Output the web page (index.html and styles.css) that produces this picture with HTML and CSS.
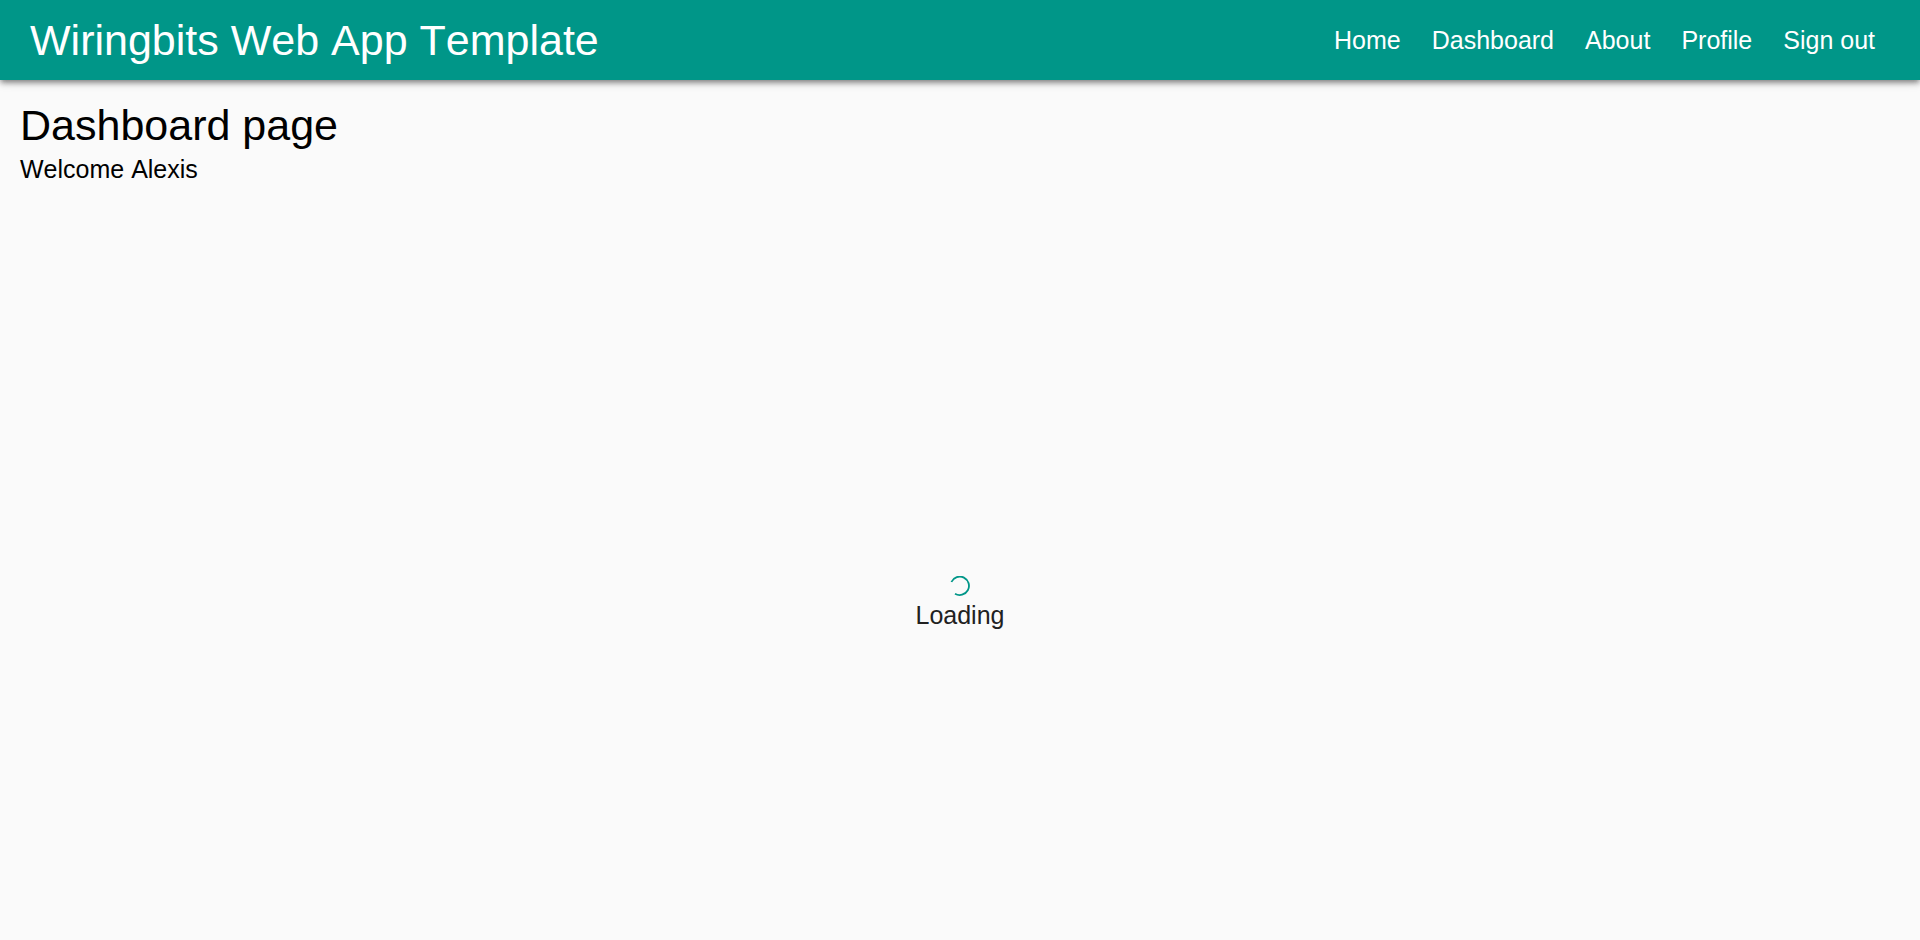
FILE: index.html
```html
<!DOCTYPE html>
<html lang="en">
<head>
<meta charset="utf-8">
<title>Wiringbits Web App Template</title>
<link rel="stylesheet" href="styles.css">
</head>
<body>
<header class="appbar">
  <h1 class="brand">Wiringbits Web App Template</h1>
  <nav class="nav">
    <a href="#">Home</a>
    <a href="#">Dashboard</a>
    <a href="#">About</a>
    <a href="#">Profile</a>
    <a href="#">Sign out</a>
  </nav>
</header>
<main class="page">
  <h2 class="title">Dashboard page</h2>
  <p class="welcome">Welcome Alexis</p>
  <div class="loader" role="status">
    <svg class="spinner" viewBox="0 0 20 20" aria-hidden="true"><path d="M1.4 6A9.2 9.2 0 1 1 5 17.7"/></svg>
    <span>Loading</span>
  </div>
</main>
</body>
</html>
```

FILE: styles.css
```css
* {
  box-sizing: border-box;
}

body {
  margin: 0;
  min-height: 100vh;
  display: flex;
  flex-direction: column;
  background: #fafafa;
  color: #000;
  font-family: "Liberation Sans", Arial, sans-serif;
  font-size: 25px;
  font-kerning: none;
  line-height: 38px;
}

.appbar {
  display: flex;
  align-items: center;
  justify-content: space-between;
  min-height: 80px;
  padding: 0 45px 0 30px;
  background: #009688;
  color: #fff;
  box-shadow: 0 3px 5px -1px rgba(0, 0, 0, 0.35), 0 4px 6px 0 rgba(0, 0, 0, 0.14), 0 1px 12px 0 rgba(0, 0, 0, 0.12);
}

.brand,
.title {
  margin: 0;
  font-size: 43px;
  font-weight: 400;
  line-height: 50px;
}

.nav {
  display: flex;
  gap: 31px;
}

.nav a {
  color: inherit;
  text-decoration: none;
}

.page {
  flex: 1;
  display: flex;
  flex-direction: column;
  padding: 20px;
}

.welcome {
  margin: 0;
}

.loader {
  flex: 1;
  display: flex;
  flex-direction: column;
  align-items: center;
  justify-content: center;
  padding-top: 102px;
  color: #212121;
}

.spinner {
  width: 20px;
  height: 20px;
  fill: none;
  stroke: #009688;
  stroke-width: 1.8;
}
```
